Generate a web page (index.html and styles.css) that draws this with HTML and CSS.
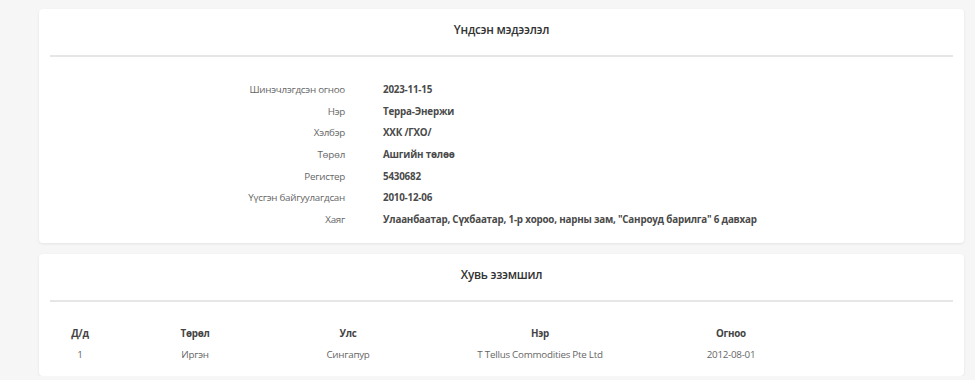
FILE: index.html
```html
<!DOCTYPE html>
<html lang="mn">
<head>
<meta charset="utf-8">
<link rel="stylesheet" href="styles.css">
</head>
<body>
<div class="page">
  <section class="card">
    <h2 class="card-title">Үндсэн мэдээлэл</h2>
    <hr class="divider">
    <dl class="info">
      <div class="info-row"><dt>Шинэчлэгдсэн огноо</dt><dd>2023-11-15</dd></div>
      <div class="info-row"><dt>Нэр</dt><dd>Терра-Энержи</dd></div>
      <div class="info-row"><dt>Хэлбэр</dt><dd>ХХК /ГХО/</dd></div>
      <div class="info-row"><dt>Төрөл</dt><dd>Ашгийн төлөө</dd></div>
      <div class="info-row"><dt>Регистер</dt><dd>5430682</dd></div>
      <div class="info-row"><dt>Үүсгэн байгуулагдсан</dt><dd>2010-12-06</dd></div>
      <div class="info-row"><dt>Хаяг</dt><dd>Улаанбаатар, Сүхбаатар, 1-р хороо, нарны зам, "Санроуд барилга" 6 давхар</dd></div>
    </dl>
  </section>
  <section class="card">
    <h2 class="card-title">Хувь эзэмшил</h2>
    <hr class="divider">
    <table class="owners">
      <thead>
        <tr><th class="c1">Д/д</th><th class="c2">Төрөл</th><th class="c3">Улс</th><th class="c4">Нэр</th><th class="c5">Огноо</th><th class="c6"></th></tr>
      </thead>
      <tbody>
        <tr><td>1</td><td>Иргэн</td><td>Сингапур</td><td>T Tellus Commodities Pte Ltd</td><td>2012-08-01</td><td></td></tr>
      </tbody>
    </table>
  </section>
</div>
</body>
</html>
```
FILE: styles.css
```css
html, body {
  margin: 0;
  padding: 0;
  background: #f6f6f6;
  font-family: "Open Sans", "Noto Sans", sans-serif;
  color: #444;
}
.page {
  padding: 9px 11px 0 39px;
  display: flex;
  flex-direction: column;
  gap: 11px;
}
.card {
  background: #fff;
  border-radius: 4px;
  box-shadow: 0 1px 3px rgba(0,0,0,0.08);
  padding: 0 11px;
}
.card-title {
  margin: 0;
  padding-top: 12px;
  height: 34px;
  box-sizing: border-box;
  text-align: center;
  font-size: 11.8px;
  letter-spacing: -0.25px;
  line-height: 16px;
  font-weight: 600;
  color: #333;
}
.divider {
  margin: 12px 0 0;
  border: 0;
  height: 2px;
  background: #e6e6e6;
}
.info {
  margin: 0;
  padding: 22px 0 13px;
}
.info-row {
  display: flex;
  height: 21.6px;
  align-items: center;
  font-size: 9.8px;
}
.info-row dt {
  width: 295px;
  text-align: right;
  color: #666;
  letter-spacing: -0.25px;
}
.info-row dd {
  margin: 0 0 0 38px;
  font-weight: 700;
  color: #4a4a4a;
  letter-spacing: -0.2px;
}
.owners {
  width: 100%;
  border-collapse: collapse;
  margin-top: 20px;
  margin-bottom: 12px;
  font-size: 9.8px;
  letter-spacing: -0.25px;
}
.owners th, .owners td {
  text-align: center;
  padding: 0;
}
.owners th {
  height: 22px;
  font-weight: 700;
  color: #444;
}
.owners td {
  height: 20px;
  color: #666;
}
.c1 { width: 60px; }
.c2 { width: 170px; }
.c3 { width: 136px; }
.c4 { width: 248px; }
.c5 { width: 134px; }
```
